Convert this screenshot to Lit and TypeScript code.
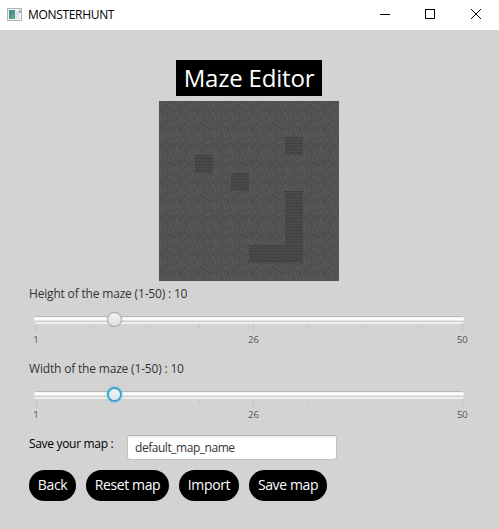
import { LitElement, html, svg, css } from "lit";
import { customElement, property } from "lit/decorators.js";

const CELL = 18;
const WALLS = new Set(["7,2", "2,3", "4,4", "7,5", "7,6", "7,7", "5,8", "6,8", "7,8"]);

// Deterministic noise so that every tile shares the same grain.
function grain(wall: boolean) {
  let seed = wall ? 91 : 37;
  const next = () => ((seed = (seed * 1103515245 + 12345) % 2147483648) / 2147483648);
  const out = [];
  for (let y = 0; y < CELL; y++) {
    for (let x = 0; x < CELL; x++) {
      const v = wall
        ? Math.round(71 + (y % 3 === 0 ? -6 : 2) + (next() - 0.5) * 6)
        : Math.round(82 + ((x + y * 2) % 4 < 2 ? -4 : 4) + (next() - 0.5) * 18);
      out.push(svg`<rect x=${x} y=${y} width="1" height="1" fill=${`rgb(${v},${v},${v})`}></rect>`);
    }
  }
  return out;
}

@customElement("maze-board")
export class MazeBoard extends LitElement {
  static styles = css`
    :host { display: block; width: 180px; height: 180px; }
    svg { display: block; }
  `;
  render() {
    const cells = [...WALLS].map((k) => k.split(",").map(Number));
    return html`<svg width="180" height="180" shape-rendering="crispEdges">
      <defs>
        <pattern id="floor" width="18" height="18" patternUnits="userSpaceOnUse">${grain(false)}</pattern>
        <pattern id="wall" width="18" height="18" patternUnits="userSpaceOnUse">${grain(true)}</pattern>
      </defs>
      <rect width="180" height="180" fill="url(#floor)"></rect>
      ${cells.map(([x, y]) => svg`<rect x=${x * CELL} y=${y * CELL} width="18" height="18" fill="url(#wall)"></rect>`)}
    </svg>`;
  }
}

@customElement("size-slider")
export class SizeSlider extends LitElement {
  @property() label = "";
  @property({ type: Number }) value = 10;
  @property({ type: Boolean }) active = false;
  static styles = css`
    :host { display: block; height: 75px; }
    .label { height: 18px; line-height: 18px; font-size: 12px; letter-spacing: -0.18px; color: #333; white-space: nowrap; }
    .rail { position: relative; height: 8px; margin: 13px 0 0 5px; width: 430px; box-sizing: border-box; border-radius: 4px;
      background: linear-gradient(#b8b8b8 0 1px, #f0f0f0 1px, #fff 3px, #f8f8f8 4px, #cfcfcf 5px, #d3d3d3 6px, #efefef 6px); }
    .thumb { position: absolute; top: -4px; width: 15px; height: 15px; box-sizing: border-box; border-radius: 50%;
      border: 1px solid #a3a3a3; background: linear-gradient(#f2f2f2, #dedede); box-shadow: 0 0 1px #aaa; }
    .thumb.active { border: 2px solid #38a5cf; background: linear-gradient(#f0f3f5, #dce5ea); box-shadow: 0 0 2px #45b5dd; }
    .ticks { position: relative; height: 24px; margin-left: 7px; width: 427px; }
    .tick { position: absolute; top: 1px; width: 1px; height: 3px; background: #c6c6c6; }
    .tick.major { height: 6px; background: #c0c0c0; }
    .num { position: absolute; top: 9px; transform: translateX(-50%); font-size: 9.6px; line-height: 14px; letter-spacing: -0.1px; color: #555; }
  `;
  private at(v: number) { return (v - 1) * 8.7; }
  render() {
    const ticks = [1, 7.25, 13.5, 19.75, 26, 32.25, 38.5, 44.75, 50];
    const majors = [1, 26, 50];
    return html`
      <div class="label">${this.label} : ${this.value}</div>
      <div class="rail"><div class="thumb ${this.active ? "active" : ""}" style="left:${Math.round(this.at(this.value) - 5)}px"></div></div>
      <div class="ticks">
        ${ticks.map((t) => html`<div class="tick ${majors.includes(t) ? "major" : ""}" style="left:${Math.round(this.at(t))}px"></div>`)}
        ${majors.map((t) => html`<span class="num" style="left:${this.at(t)}px">${t}</span>`)}
      </div>`;
  }
}

@customElement("app-root")
export class AppRoot extends LitElement {
  static styles = css`
    :host { display: flex; flex-direction: column; width: 499px; height: 529px; overflow: hidden; background: #d3d3d3;
      font-family: "Open Sans", "Noto Sans", sans-serif; }
    .bar { display: flex; align-items: center; height: 30px; background: #fff; flex: none; }
    .app-icon { margin-left: 7px; }
    .name { margin-left: 6px; flex: 1; font-size: 12px; line-height: 30px; color: #000; letter-spacing: -0.32px; }
    .ctl { width: 46px; height: 30px; display: block; }
    .body { display: flex; flex-direction: column; padding: 30px 30px 0 29px; }
    .title { align-self: center; width: 146px; height: 36px; box-sizing: border-box; background: #000; color: #fff;
      text-align: center; font-size: 24px; line-height: 36px; letter-spacing: -0.2px; white-space: nowrap; }
    maze-board { align-self: center; margin: 5px 0 4px; }
    .save { display: flex; height: 26px; align-items: flex-start; }
    .caption { width: 98px; font-size: 12px; line-height: 18px; color: #000; letter-spacing: -0.32px; white-space: nowrap; }
    .field { width: 210px; height: 25px; box-sizing: border-box; border: 1px solid #c2c2c2; border-top-color: #b4b4b4; border-radius: 3px;
      background: linear-gradient(#f0f0f0, #fff 3px); padding: 0 7px; font: 12px/24px "Open Sans", "Noto Sans", sans-serif; color: #333; letter-spacing: -0.46px; outline: none; }
    .actions { display: flex; gap: 10px; margin-top: 9px; }
    .btn { height: 31px; padding: 0 0 1px; border: 0; border-radius: 16px; background: #000; color: #fff; white-space: nowrap;
      font: 14px/30px "Open Sans", "Noto Sans", sans-serif; letter-spacing: -0.38px; }
    .back { width: 47px; } .reset { width: 83px; } .import { width: 60px; } .store { width: 78px; }
  `;
  render() {
    return html`
      <div class="bar">
        <svg class="app-icon" width="15" height="14" viewBox="0 0 15 14">
          <defs><linearGradient id="pane" x2="1" y2="1"><stop stop-color="#3f8580"></stop><stop offset="1" stop-color="#63ad92"></stop></linearGradient></defs>
          <rect x=".5" y=".5" width="14" height="12" fill="#f4f6f6" stroke="#b0b5b7"></rect>
          <rect x="2" y="2" width="6" height="9" fill="url(#pane)"></rect>
          <rect x="8" y="3" width="4" height="8" fill="#dde3ea"></rect>
          <rect x="12" y="2" width="1.5" height="3" fill="#7fa6a9"></rect>
        </svg>
        <span class="name">MONSTERHUNT</span>
        <svg class="ctl" viewBox="0 0 46 30"><path d="M19 14.5h10" stroke="#000"></path></svg>
        <svg class="ctl" viewBox="0 0 46 30"><rect x="18.5" y="9.5" width="9" height="9" fill="none" stroke="#000"></rect></svg>
        <svg class="ctl" viewBox="0 0 46 30"><path d="M18 9l10 10M28 9l-10 10" stroke="#000"></path></svg>
      </div>
      <div class="body">
        <div class="title">Maze Editor</div>
        <maze-board></maze-board>
        <size-slider label="Height of the maze (1-50)" .value=${10}></size-slider>
        <size-slider label="Width of the maze (1-50)" .value=${10} active></size-slider>
        <div class="save"><span class="caption">Save your map :</span><input class="field" value="default_map_name" /></div>
        <div class="actions">
          <button class="btn back">Back</button>
          <button class="btn reset">Reset map</button>
          <button class="btn import">Import</button>
          <button class="btn store">Save map</button>
        </div>
      </div>`;
  }
}
